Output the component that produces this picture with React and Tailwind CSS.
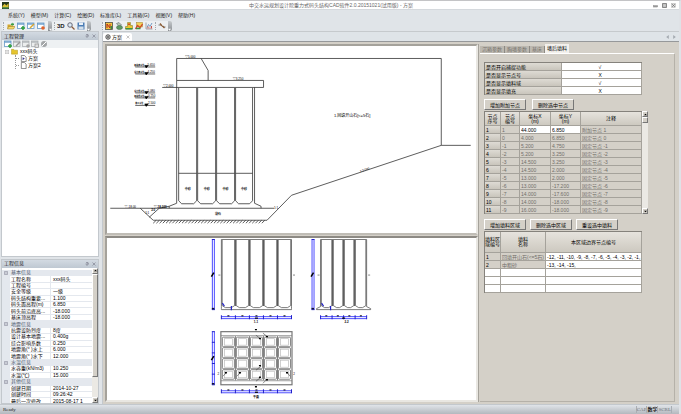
import { useState } from 'react'

const menus = ['系统(Y)', '模型(M)', '计算(C)', '绘图(D)', '标准库(L)', '工具箱(G)', '视图(V)', '帮助(H)']

const projectInfo = [
  { group: '基本信息' },
  { name: '工程名称', value: 'xxx码头' },
  { name: '工程编号', value: '' },
  { name: '安全等级', value: '一级' },
  { name: '码头结构重要...', value: '1.100' },
  { name: '码头面高程(m)', value: '6.850' },
  { name: '码头前沿底高...', value: '-18.000' },
  { name: '基床顶高程', value: '-18.000' },
  { group: '地震信息' },
  { name: '抗震设防烈度', value: '8度' },
  { name: '设计基本地震...', value: '0.400g' },
  { name: '综合影响系数', value: '0.250' },
  { name: '地震角(° )水上', value: '6.000' },
  { name: '地震角(° )水下', value: '12.000' },
  { group: '水温信息' },
  { name: '水容重(kN/m3)', value: '10.250' },
  { name: '水温(℃)', value: '15.000' },
  { group: '其他信息' },
  { name: '创建日期', value: '2014-10-27' },
  { name: '创建时间', value: '09:26:42' },
  { name: '最后一次修改', value: '2015-08-17 1' },
]

const options = [
  { name: '是否开启捕捉功能', on: true },
  { name: '是否显示节点号', on: false },
  { name: '是否显示填料域', on: true },
  { name: '是否显示填充', on: false },
]

const nodes = [
  ['1', '44.000', '6.850', '附加节点 1'],
  ['0', '4.000', '6.850', '固定节点 0'],
  ['-1', '5.200', '4.750', '固定节点 -1'],
  ['-2', '5.200', '3.250', '固定节点 -2'],
  ['-3', '14.500', '3.250', '固定节点 -3'],
  ['-4', '14.500', '2.000', '固定节点 -4'],
  ['-5', '13.000', '2.000', '固定节点 -5'],
  ['-6', '13.000', '-17.200', '固定节点 -6'],
  ['-7', '14.000', '-17.600', '固定节点 -7'],
  ['-8', '14.000', '-18.000', '固定节点 -8'],
  ['-9', '16.000', '-18.000', '固定节点 -9'],
]

const regions = [
  ['1', '回填开山石(<=5石)', '-12, -11, -10, -9, -8, -7, -6, -5, -4, -3, -2, -1,'],
  ['2', '中粗砂', '-13, -14, -15,'],
  ['', '', ''],
  ['', '', ''],
  ['', '', ''],
]

const sideTabs = ['沉箱参数', '胸墙参数', '基床', '墙后填料']

function Icon({ children, size = 'size-[8px]' }) {
  return (
    <svg viewBox="0 0 16 16" className={`${size} shrink-0`} aria-hidden="true">
      {children}
    </svg>
  )
}

function FormIcon({ mark, gray }) {
  const line = gray ? '#a9adb0' : '#5b93c4'
  return (
    <Icon>
      <rect x="1" y="2" width="13" height="11" fill={gray ? '#eceeee' : '#fff'} stroke={line} strokeWidth="1.5" />
      <path d="M1 4H14" stroke={line} strokeWidth="2.5" />
      {mark === 'add' && <path d="M12 8V16M8 12H16" stroke="#2f9e3c" strokeWidth="3" />}
      {mark === 'edit' && <path d="M6 12L14 4" stroke={gray ? '#999' : '#d9a52e'} strokeWidth="3" />}
      {mark === 'del' && <circle cx="12" cy="12" r="3.6" fill={gray ? '#a5a5a5' : '#e2622a'} />}
      {mark === 'copy' && <rect x="8" y="8" width="7" height="7" fill="#ddd" stroke="#999" strokeWidth="1.5" />}
    </Icon>
  )
}

function BarEnd() {
  return (
    <span className="flex h-[10px] w-[4px] shrink-0 items-end justify-center rounded-r-[2px] bg-linear-to-b from-[#c6cacd] to-[#8b8f93]">
      <svg viewBox="0 0 4 4" className="size-[3px]" aria-hidden="true">
        <path d="M0 1H4L2 3.5Z" fill="#fff" />
      </svg>
    </span>
  )
}

function Grip() {
  return <span className="h-[8px] shrink-0 border-l border-dotted border-[#a4a9ae]" />
}

function Tool({ label, children }) {
  return (
    <button type="button" aria-label={label} className="flex h-[9px] w-[8px] items-center justify-center">
      {children}
    </button>
  )
}

function Toolbar() {
  return (
    <div className="flex h-[11px] shrink-0 items-center bg-[#e0e4e8] pl-[2px]">
      <div className="flex items-center rounded-[2px] bg-[#eceff1] pl-[1px]">
        <Grip />
        <div className="flex gap-[2px] px-[3px]">
          <Tool label="打开">
            <Icon>
              <path d="M1 5H6L8 7H13V14H1Z" fill="#d5a72c" />
              <path d="M3 9H16L13 14H1Z" fill="#f5d86b" stroke="#9c7a1e" />
              <path d="M7 5L11 1V3H14V6H11V8Z" fill="#3c9c42" />
            </Icon>
          </Tool>
          <Tool label="新建"><FormIcon mark="add" /></Tool>
          <Tool label="编辑"><FormIcon mark="edit" /></Tool>
          <Tool label="删除"><FormIcon mark="del" /></Tool>
        </div>
        <BarEnd />
      </div>
      <div className="flex items-center rounded-[2px] bg-[#eceff1] pl-[2px]">
        <Grip />
        <div className="flex items-center gap-[2px] px-[2px]">
          <button type="button" className="text-[6px] leading-[8px] font-bold text-[#222]">3D</button>
          <Tool label="缩放">
            <Icon>
              <circle cx="6" cy="6" r="4.5" fill="#dcebf5" stroke="#5a5a6a" strokeWidth="1.8" />
              <path d="M9.500 9.500L15 15" stroke="#8a5a3a" strokeWidth="2.6" />
            </Icon>
          </Tool>
          <Tool label="保存">
            <Icon>
              <rect x="1" y="1" width="14" height="14" fill="#4b7db5" />
              <rect x="4" y="1" width="8" height="5" fill="#e9f0f7" />
              <rect x="3" y="9" width="10" height="6" fill="#d3dfea" />
            </Icon>
          </Tool>
        </div>
        <BarEnd />
      </div>
      <div className="ml-[11px] flex items-center rounded-[2px] bg-[#eceff1]">
        <Grip />
        <div className="flex items-center gap-[2px] px-[2px]">
          <Tool label="荷载">
            <Icon>
              <rect x="1" y="1" width="14" height="14" fill="#f3c33e" stroke="#444" strokeWidth="1.5" />
              <path d="M4 4V12M4 4L10 12M10 4V12" stroke="#b6281c" strokeWidth="2" />
              <rect x="11" y="8" width="3" height="6" fill="#3c8c42" />
            </Icon>
          </Tool>
          <Tool label="计算">
            <Icon>
              <path d="M3 3L8 1L13 6L8 9Z" fill="#b5c8b2" stroke="#556" />
              <ellipse cx="9" cy="11" rx="6" ry="4" fill="#5e9b62" stroke="#465" />
            </Icon>
          </Tool>
          <Tool label="结构">
            <Icon>
              <path d="M5 1H11V7H15V14H1V9H5Z" fill="#e9c531" stroke="#7d7118" />
              <path d="M1 12H15V15H1Z" fill="#3f9144" />
              <path d="M6 3H10V6H6Z" fill="#d54a2c" />
            </Icon>
          </Tool>
          <Tool label="绘图">
            <Icon>
              <rect x="3" y="1" width="12" height="9" fill="#f2d257" stroke="#a2842c" />
              <path d="M1 14L5 7L10 11L15 4" stroke="#d0452b" strokeWidth="2.500" fill="none" />
              <path d="M2 13H11" stroke="#3f9144" strokeWidth="3" />
            </Icon>
          </Tool>
          <Tool label="图表">
            <Icon>
              <path d="M2 1V14H15" stroke="#8a8f95" strokeWidth="1.500" fill="none" />
              <path d="M4 11L7 5L10 9L14 2" stroke="#4d83b8" strokeWidth="1.500" fill="none" />
              <path d="M6 13V9M10 13V11M13 13V8" stroke="#cc5146" strokeWidth="2" />
            </Icon>
          </Tool>
          <Grip />
          <Tool label="线段">
            <Icon>
              <path d="M1 6H6L10 10H15" stroke="#555" strokeWidth="1.500" fill="none" />
              <path d="M4 3L8 8M9 8L13 12" stroke="#8c5c34" strokeWidth="2.500" />
            </Icon>
          </Tool>
        </div>
        <BarEnd />
      </div>
    </div>
  )
}

function PanelHeader({ title }) {
  return (
    <div className="flex h-[8px] shrink-0 items-center bg-linear-to-b from-[#d3dae2] to-[#bfc8d2] px-[2px] text-[#222]">
      <h2 className="flex-1">{title}</h2>
      <button type="button" aria-label="固定" className="mr-[3px]">
        <svg viewBox="0 0 8 8" className="size-[4px]" aria-hidden="true"><path d="M2 1H6V4H7H1M4 4V8" stroke="#667" fill="none" /></svg>
      </button>
      <button type="button" aria-label="关闭">
        <svg viewBox="0 0 8 8" className="size-[4px]" aria-hidden="true"><path d="M1 1L7 7M7 1L1 7" stroke="#667" /></svg>
      </button>
    </div>
  )
}

function ScrollBar({ thumb }) {
  return (
    <div className="flex w-[6px] shrink-0 flex-col bg-[#ebe9e4]">
      <button type="button" aria-label="向上" className="flex h-[6px] items-center justify-center border border-r-[#777] border-b-[#777] border-l-white border-t-white bg-[#d4d0c8]">
        <svg viewBox="0 0 4 4" className="size-[3px]" aria-hidden="true"><path d="M0 3H4L2 1Z" /></svg>
      </button>
      <div className={`${thumb} border border-r-[#777] border-b-[#777] border-l-white border-t-white bg-[#d4d0c8]`} />
      <div className="flex-1" />
      <button type="button" aria-label="向下" className="flex h-[6px] items-center justify-center border border-r-[#777] border-b-[#777] border-l-white border-t-white bg-[#d4d0c8]">
        <svg viewBox="0 0 4 4" className="size-[3px]" aria-hidden="true"><path d="M0 1H4L2 3Z" /></svg>
      </button>
    </div>
  )
}

function ProjectTree() {
  return (
    <section className="flex min-h-0 flex-[227] flex-col border border-[#c3c8cd] bg-white">
      <PanelHeader title="工程管理" />
      <div className="flex h-[8px] shrink-0 items-center gap-[1px] bg-[#eef1f3] pl-[2px]">
        <Tool label="新建方案"><FormIcon mark="add" /></Tool>
        <Tool label="编辑方案"><FormIcon mark="edit" gray /></Tool>
        <Tool label="删除方案"><FormIcon mark="del" gray /></Tool>
        <Tool label="复制方案"><FormIcon mark="copy" gray /></Tool>
        <Tool label="属性">
          <Icon>
            <circle cx="8" cy="8" r="6" fill="#a3a6a8" />
            <path d="M4 12L12 4" stroke="#fff" strokeWidth="2" />
          </Icon>
        </Tool>
      </div>
      <ul className="pl-[3px] leading-[7px] text-black">
        <li>
          <div className="flex h-[7px] items-center gap-[2px]">
            <Icon size="size-[4px]"><path d="M1 1H15V15H1ZM4 8H12" stroke="#888" strokeWidth="2" fill="none" /></Icon>
            <Icon size="size-[7px]"><path d="M1 3H6L8 5H15V14H1Z" fill="#e6c52d" stroke="#a58c1c" /></Icon>
            <span>xxx码头</span>
          </div>
          <ul className="ml-[10px] border-l border-dotted border-[#999]">
            {['方案', '方案2'].map((name, i) => (
              <li key={name} className="flex h-[7px] items-center gap-[1px]">
                <span className="w-[3px] border-t border-dotted border-[#999]" />
                <Icon size="size-[7px]">
                  <path d="M3 1H10L14 5V15H3Z" fill="#fff" stroke="#555" strokeWidth="1.500" />
                  {i === 0 && <path d="M6 5L11 8L6 12Z" fill="#3a3a8c" />}
                </Icon>
                <span>{name}</span>
              </li>
            ))}
          </ul>
        </li>
      </ul>
    </section>
  )
}

function ProjectInfo() {
  return (
    <section className="flex min-h-0 flex-[145] flex-col border border-[#c3c8cd] bg-white">
      <PanelHeader title="工程信息" />
      <div className="flex min-h-0 flex-1 overflow-hidden">
        <table className="mt-[2px] h-full flex-1 table-fixed border-separate border-spacing-0 leading-[5px] text-black">
          <colgroup>
            <col className="w-[8px]" />
            <col className="w-[41px]" />
            <col />
          </colgroup>
          <tbody>
            {projectInfo.map((row) =>
              row.group ? (
                <tr key={row.group} className="bg-[#e4e8ee] text-[#4d5a6c]">
                  <td className="border-b border-[#e4e8ee] p-0">
                    <svg viewBox="0 0 8 8" className="mx-auto size-[4px]" aria-hidden="true"><path d="M1 1H7V7H1ZM2 4H6" stroke="#778" fill="none" /></svg>
                  </td>
                  <th colSpan={2} scope="rowgroup" className="border-b border-[#e4e8ee] py-0 pl-[1px] text-left font-normal">{row.group}</th>
                </tr>
              ) : (
                <tr key={row.name}>
                  <td className="border-b border-[#e4e8ee] bg-[#e4e8ee] p-0" />
                  <th scope="row" className="overflow-hidden border-r border-b border-[#e4e8ee] py-0 pl-[1px] text-left font-normal whitespace-nowrap">{row.name}</th>
                  <td className="overflow-hidden border-b border-[#e4e8ee] py-0 pl-[2px] whitespace-nowrap">{row.value}</td>
                </tr>
              ),
            )}
          </tbody>
        </table>
        <ScrollBar thumb="h-[103px]" />
      </div>
    </section>
  )
}

function Mark({ x, y, children, size = 3, bold }) {
  return (
    <text x={x} y={y} fontSize={size} fontWeight={bold ? 700 : 400} textAnchor="middle" fill="#000">
      {children}
    </text>
  )
}

// water levels beside the section
const levels = [
  ['极端高水位', '5.650', 66],
  ['设计高水位', '4.250', 73],
  ['设计低水位', '1.080', 92],
  ['极端低水位', '-0.250', 97],
  ['施工水位', '-2.500', 104.5],
]

const cells = [[179.5, 197.5], [198.5, 216.5], [217.5, 235.5], [236.5, 253.5]]

function SectionDrawing() {
  return (
    <svg viewBox="109 46 367 187" className="block h-full w-full" role="img" aria-label="断面图">
      <g fill="none" stroke="#333" strokeWidth="0.8">
        <path d="M177.500 80.500V58.500H442.500V145.500H472" />
        <path d="M202 58.500L209 70.500V80.500" />
        <path d="M163 87.500H264.500V80.500H177.500V203.500L170 206.500V208.500" />
        <path d="M255.500 87.500V203.500L262 206.500V208.500" />
        {cells.map(([a, b]) => (
          <path key={a} d={`M${a} 88V201L${a + 3} 204H${b - 3}L${b} 201V88M${a} 173.500H${b}`} />
        ))}
        <path d="M111 208.500H275" />
        <path d="M141 208.500L154 220.500H268L292.500 195.500L442.500 145.500" />
        <path d="M150 217.500L160 208.500L170 206.500" />
        {Array.from({ length: 35 }, (_, i) => (
          <path key={i} d={`M${157 + i * 3.2} 220.500L${154 + i * 3.2} 223.500`} />
        ))}
      </g>
      {levels.map(([name, value, y]) => (
        <g key={y}>
          <Mark x={140} y={y} size={2} bold>{name}</Mark>
          <path d={`M136 ${y + 1}H156M145.500 ${y - 0.500}H149L147 ${y + 2}Z`} stroke="#000" strokeWidth="0.600" />
          <Mark x={152} y={y} size={3}>{value}</Mark>
        </g>
      ))}
      <Mark x={191} y={58}>▽5.000</Mark>
      <Mark x={239} y={80}>▽3.250</Mark>
      <Mark x={169} y={87}>▽2.000</Mark>
      <Mark x={131} y={208}>▽-18.00</Mark>
      <Mark x={161} y={208} bold>▽-18.000</Mark>
      <Mark x={148} y={214}>1:1</Mark>
      <Mark x={154} y={211} bold>2.0</Mark>
      <Mark x={277} y={209}>1:1</Mark>
      {cells.map(([a, b]) => (
        <Mark key={a} x={(a + b) / 2} y={190} bold>中砂</Mark>
      ))}
      <Mark x={219} y={215} bold>块石</Mark>
      <text x="335" y="117" fontSize="4" fill="#000">1.回填开山石[&lt;=5石]</text>
      <text x="366" y="171" fontSize="3" textAnchor="middle" transform="rotate(-18 366 171)">1:3.000</text>
    </svg>
  )
}

// dimension chain: two blue lines with black ticks
function DimH({ x1, x2, y, n }) {
  const step = (x2 - x1) / n
  return (
    <g>
      <path d={`M${x1} ${y}H${x2}M${x1} ${y + 2}H${x2}`} stroke="#3a3aff" strokeWidth="0.9" />
      {Array.from({ length: n + 1 }, (_, i) => (
        <path key={i} d={`M${x1 + i * step} ${y - 1.5}V${y + 2.5}`} stroke="#2222c8" strokeWidth="1" />
      ))}
      {Array.from({ length: n }, (_, i) => (
        <path key={i} d={`M${x1 + (i + 0.5) * step - 1} ${y - 0.8}h2`} stroke="#000" strokeWidth="1" />
      ))}
      <path d={`M${(x1 + x2) / 2 - 1.500} ${y + 1.500}h3`} stroke="#000" strokeWidth="1.200" />
    </g>
  )
}

function DimV({ x, y1, y2, n }) {
  const step = (y2 - y1) / n
  return (
    <g>
      <path d={`M${x} ${y1}V${y2}M${x + 2} ${y1}V${y2}`} stroke="#3a3aff" strokeWidth="0.9" />
      {Array.from({ length: n + 1 }, (_, i) => (
        <path key={i} d={`M${x - 0.5} ${y1 + i * step}H${x + 2.5}`} stroke="#2222c8" strokeWidth="1" />
      ))}
      <path d={`M${x - 1} ${(y1 + y2) / 2 + 2}l2.500 -4`} stroke="#000" strokeWidth="1.500" />
      <path d={`M${x - 0.500} ${y2 - 1}h2.500`} stroke="#113" strokeWidth="1.500" />
    </g>
  )
}

function Elevation({ xs, foot }) {
  const left = xs[0]
  const right = xs[xs.length - 1]
  return (
    <g fill="none" stroke="#444" strokeWidth="0.7">
      <path d={`M${left} 239.500H${right}M${left - foot} 309.500H${right + foot}V308.500L${right} 306.500V239.500M${left} 239.500V306.500L${left - foot} 308.500V309.500`} />
      {xs.slice(1).map((b, i) => {
        const a = xs[i]
        return <path key={b} d={`M${a + 0.8} 240V305.500L${a + 4} 307.500H${b - 4}L${b - 0.8} 305.500V240`} />
      })}
      {xs.slice(1, -1).map((x) => (
        <path key={x} d={`M${x} 240V306`} stroke="#555" strokeWidth="1" />
      ))}
      <path d={`M${left + 1} 303l2 3M${left + 10} 306v4`} stroke="#2222c8" strokeWidth="1.2" />
      <path d={`M${left - 3} 275h2M${right + 1.500} 275h2`} stroke="#555" />
    </g>
  )
}

function PlanDrawing() {
  const cols = [222.5, 236.5, 250.5, 264.5, 278.5, 292.5]
  const rows = [336.5, 347, 358, 369, 379.5]
  return (
    <svg viewBox="109 238 367 162" className="block h-full w-full" role="img" aria-label="沉箱图">
      <Elevation xs={cols} foot={0} />
      <Elevation xs={[321.5, 333.5, 344.5, 355.5, 367.5]} foot={4} />
      <DimV x={213.5} y1={239.5} y2={309.5} n={1} />
      <DimV x={313} y1={239.5} y2={309.5} n={1} />
      <DimH x1={222.5} x2={292.5} y={316.5} n={5} />
      <DimH x1={321.5} x2={367.5} y={316.5} n={4} />
      <g fill="none" stroke="#555" strokeWidth="0.7">
        <rect x="222" y="331.500" width="71" height="53" stroke="#777" strokeWidth="1.200" />
        <path d="M222 335.500H293M222 380.500H293" stroke="#777" />
        {rows.slice(1).map((y, r) =>
          cols.slice(1).map((x, c) => (
            <g key={`${r}-${c}`}>
              <rect x={cols[c] + 1} y={rows[r] + 0.500} width={x - cols[c] - 2} height={y - rows[r] - 1} rx="1" />
              <rect x={cols[c] + 3} y={rows[r] + 2} width={x - cols[c] - 6} height={y - rows[r] - 4} stroke="#bbb" />
            </g>
          )),
        )}
        {cols.slice(1, -1).map((x) => (
          <path key={x} d={`M${x} 336V380`} stroke="#444" />
        ))}
      </g>
      <path d="M257 335l5 4M264 333l5 4M257 370l5 -4M257 381l5 -4M264 383l4 -4M224 376l4 -4M238 376l4 -4M291 376l-3 -4" stroke="#444" strokeWidth="0.600" />
      <path d="M260 338.500h2M267 336.500h2M260 365.500h2M260 377h2M267 379.500h2M226 372.500h2M240 372.500h2M287 372.500h2M256 329.500h2M256 386.500h2" stroke="#000" strokeWidth="1.300" />
      <DimV x={213.5} y1={331.5} y2={384.5} n={5} />
      <DimH x1={222.5} x2={292.5} y={390.5} n={5} />
      <Mark x={219.500} y={374.500}>2</Mark>
      <Mark x={295} y={374.500}>2</Mark>
      <Mark x={257} y={323} bold>1-1</Mark>
      <Mark x={347.5} y={323} bold>2-2</Mark>
      <Mark x={257} y={398} bold>平面</Mark>
    </svg>
  )
}

function PushButton({ children }) {
  return (
    <button type="button" className="h-[11px] w-[42px] border border-t-white border-l-white border-r-[#777] border-b-[#777] bg-[#d4d0c8] leading-[8px] text-black">
      {children}
    </button>
  )
}

const headCell = 'border-r border-b border-[#a5a29b] bg-linear-to-b from-[#e6e3dd] to-[#cdc9c0] p-0 font-normal text-black'
const rowHead = 'h-[8px] border-r border-b border-[#a5a29b] bg-linear-to-b from-[#dedbd4] to-[#c9c5bc] px-[1px] py-0 text-left font-normal text-black'
const dataCell = 'h-[8px] overflow-hidden border-r border-b border-[#a5a29b] px-[1px] py-0 whitespace-nowrap'
const gridFrame = 'table-fixed border-separate border-spacing-0 border-t border-l border-[#85827c] leading-[6px]'

function FillPanel() {
  const [values, setValues] = useState(() => options.map((o) => o.on))

  return (
    <div className="flex flex-1 flex-col border-t border-r border-b border-t-white border-r-[#b5b1a9] border-b-[#b5b1a9] pt-[8px] pl-[4px]">
      <table className={`${gridFrame} w-[158px]`}>
        <colgroup>
          <col className="w-[77px]" />
          <col />
        </colgroup>
        <tbody>
          {options.map((o, i) => (
            <tr key={o.name}>
              <th scope="row" className={rowHead}><label htmlFor={`opt-${i}`}>{o.name}</label></th>
              <td className={`${dataCell} bg-white text-center`}>
                <input
                  id={`opt-${i}`}
                  type="checkbox"
                  checked={values[i]}
                  onChange={() => setValues(values.map((v, k) => (k === i ? !v : v)))}
                  className="mx-auto block h-[6px] w-[6px] appearance-none leading-[6px] text-black before:block before:content-['X'] checked:before:content-['√']"
                />
              </td>
            </tr>
          ))}
        </tbody>
      </table>

      <div className="mt-[4px] flex gap-[6px]">
        <PushButton>增加附加节点</PushButton>
        <PushButton>删除选中节点</PushButton>
      </div>

      <div className="mt-[1px] flex">
        <table className={`${gridFrame} w-[158px]`}>
          <colgroup>
            <col className="w-[16px]" />
            <col className="w-[19px]" />
            <col className="w-[31px]" />
            <col className="w-[30px]" />
            <col />
          </colgroup>
          <thead>
            <tr className="h-[14px] leading-[5px]">
              <th className={headCell}>节点<br />序号</th>
              <th className={headCell}>节点<br />编号</th>
              <th className={headCell}>坐标X<br />(m)</th>
              <th className={headCell}>坐标Y<br />(m)</th>
              <th className={headCell}>注释</th>
            </tr>
          </thead>
          <tbody className="text-[#716e68]">
            {nodes.map(([id, x, y, note], i) => (
              <tr key={id}>
                <th scope="row" className={rowHead}>{i + 1}</th>
                <td className={dataCell}>{id}</td>
                {[x, y].map((v, k) =>
                  i === 0 ? (
                    <td key={k} className={`${dataCell} bg-white text-black`}>
                      <input aria-label={k === 0 ? '坐标X' : '坐标Y'} defaultValue={v} className="block h-[6px] w-full leading-[6px] outline-none" />
                    </td>
                  ) : (
                    <td key={k} className={dataCell}>{v}</td>
                  ),
                )}
                <td className={dataCell}>{note}</td>
              </tr>
            ))}
          </tbody>
        </table>
        <ScrollBar thumb="h-[6px]" />
      </div>

      <div className="mt-[5px] flex gap-[4px]">
        <PushButton>增加填料区域</PushButton>
        <PushButton>删除选中区域</PushButton>
        <PushButton>重设选中填料</PushButton>
      </div>

      <table className={`${gridFrame} mt-[1px] w-[158px]`}>
        <colgroup>
          <col className="w-[16px]" />
          <col className="w-[45px]" />
          <col />
        </colgroup>
        <thead>
          <tr className="h-[21px] leading-[5px]">
            <th className={headCell}>填料区<br />域编号</th>
            <th className={headCell}>填料<br />名称</th>
            <th className={headCell}>本区域边界节点编号</th>
          </tr>
        </thead>
        <tbody className="text-black">
          {regions.map(([id, name, list], i) => (
            <tr key={i}>
              <td className={`${dataCell} ${id ? 'bg-[#d4d0c8]' : 'bg-white'}`}>{id}</td>
              <td className={`${dataCell} text-[#716e68] ${id ? 'bg-[#d4d0c8]' : 'bg-white'}`}>{name}</td>
              <td className={`${dataCell} bg-white`}>{list}</td>
            </tr>
          ))}
        </tbody>
      </table>
    </div>
  )
}

function Workspace() {
  return (
    <main className="flex min-w-0 flex-1 flex-col border-l border-[#c3c8cd]">
      <div className="flex h-[10px] shrink-0 items-end border-t border-[#c6cacd] bg-[#dfe4e8]">
        <div className="flex h-[8px] items-center gap-[1px] rounded-t-[2px] bg-white px-[2px] text-black">
          <Icon size="size-[6px]">
            <circle cx="8" cy="8" r="6" fill="none" stroke="#333" strokeWidth="2" />
            <path d="M8 2V14M3 5L13 11M13 5L3 11" stroke="#333" strokeWidth="1.500" />
          </Icon>
          <span>方案</span>
          <button type="button" aria-label="关闭方案" className="ml-[3px]">
            <svg viewBox="0 0 8 8" className="size-[4px]" aria-hidden="true"><path d="M1 1L7 7M7 1L1 7" stroke="#888" /></svg>
          </button>
        </div>
        <div className="ml-auto flex h-[9px] items-center gap-[4px] pr-[3px]">
          <button type="button" aria-label="上一个"><svg viewBox="0 0 4 6" className="h-[4px] w-[3px]" aria-hidden="true"><path d="M4 0V6L0 3Z" fill="#a5abb1" /></svg></button>
          <button type="button" aria-label="下一个"><svg viewBox="0 0 4 6" className="h-[4px] w-[3px]" aria-hidden="true"><path d="M0 0V6L4 3Z" fill="#a5abb1" /></svg></button>
        </div>
      </div>
      <div className="flex min-h-0 flex-1 border-t border-[#96989a] bg-[#d4d0c8] pt-[2px] pb-[2px] pl-[2px]">
        <div className="flex min-w-0 flex-1 flex-col gap-[1px]">
          <div className="min-h-0 flex-[191] border-2 border-t-[#a5a29b] border-l-[#a5a29b] border-r-[#e9e7e2] border-b-[#c0bdb6] bg-white">
            <SectionDrawing />
          </div>
          <div className="min-h-0 flex-[166] border-2 border-t-[#8d8a84] border-l-[#a5a29b] border-r-[#e9e7e2] border-b-[#e9e7e2] bg-white">
            <PlanDrawing />
          </div>
        </div>
        <aside className="flex w-[201px] shrink-0 flex-col border-l border-[#a5a29b] pr-[4px] pl-[1px]">
          <div role="tablist" className="flex h-[9px] shrink-0 items-end">
            {sideTabs.map((tab, i) => (
              <button
                key={tab}
                type="button"
                role="tab"
                aria-selected={i === 3}
                className={i === 3
                  ? 'h-[9px] bg-[#f3f1ed] px-[2px] leading-[9px] text-black'
                  : 'h-[7px] border-r border-[#8d8a84] bg-[#bdb9b1] px-[2px] leading-[7px] text-[#77736d]'}
              >
                {tab}
              </button>
            ))}
          </div>
          <FillPanel />
        </aside>
      </div>
    </main>
  )
}

export default function App() {
  return (
    <div className="flex h-screen flex-col overflow-hidden border-t border-r-2 border-t-[#c4c4c6] border-r-[#dfe2e6] bg-[#e0e4e8] font-['Liberation_Sans','Noto_Sans_CJK_SC',sans-serif] text-[5px] leading-[7px] text-[#222]">
      <header className="flex h-[8px] shrink-0 items-center bg-white px-[2px]">
        <Icon size="size-[7px]">
          <rect width="16" height="16" fill="#283a1e" />
          <path d="M1 9L6 4L10 8L15 3V13H1Z" fill="#d9bf33" />
          <path d="M1 12H15V15H1Z" fill="#3d8a4d" />
        </Icon>
        <h1 className="flex-1 text-center text-[#666]">中交水运规划设计院重力式码头结构CAD软件2.0.20151021(试用版) - 方案</h1>
        <div className="flex gap-[4px] pr-[1px]">
          <button type="button" aria-label="最小化"><Icon size="size-[5px]"><rect x="1" y="8" width="14" height="5" fill="#999" stroke="#777" /></Icon></button>
          <button type="button" aria-label="最大化"><Icon size="size-[5px]"><rect x="2" y="2" width="12" height="12" fill="#ccc" stroke="#777" strokeWidth="3" /></Icon></button>
          <button type="button" aria-label="关闭"><Icon size="size-[5px]"><rect x="1" y="1" width="14" height="14" fill="#ddd" stroke="#999" /><path d="M4 4L12 12M12 4L4 12" stroke="#777" strokeWidth="3" /></Icon></button>
        </div>
      </header>
      <nav className="flex h-[11px] shrink-0 items-center gap-[6px] border-t border-[#d5d9dd] pl-[8px] text-[#222]">
        {menus.map((m) => (
          <button key={m} type="button">{m}</button>
        ))}
      </nav>
      <Toolbar />
      <div className="flex min-h-0 flex-1">
        <div className="flex w-[99px] shrink-0 flex-col gap-[2px] pl-[1px]">
          <ProjectTree />
          <ProjectInfo />
        </div>
        <div className="w-[3px] shrink-0" />
        <Workspace />
      </div>
      <footer className="flex h-[10px] shrink-0 items-center border-t border-[#c3c8cd] bg-linear-to-b from-[#e0e4e9] to-[#b3b8be] px-[3px] font-['Liberation_Serif','Noto_Sans_CJK_SC',serif]">
        <span className="flex-1">Ready</span>
        <div className="flex pr-[4px] text-[#6d737a]">
          <span className="border-l border-[#a9aeb4]">CAP</span>
          <span className="border-l border-[#a9aeb4] font-bold text-[#222]">数字</span>
          <span className="border-x border-[#a9aeb4]">SCRL</span>
        </div>
      </footer>
    </div>
  )
}
